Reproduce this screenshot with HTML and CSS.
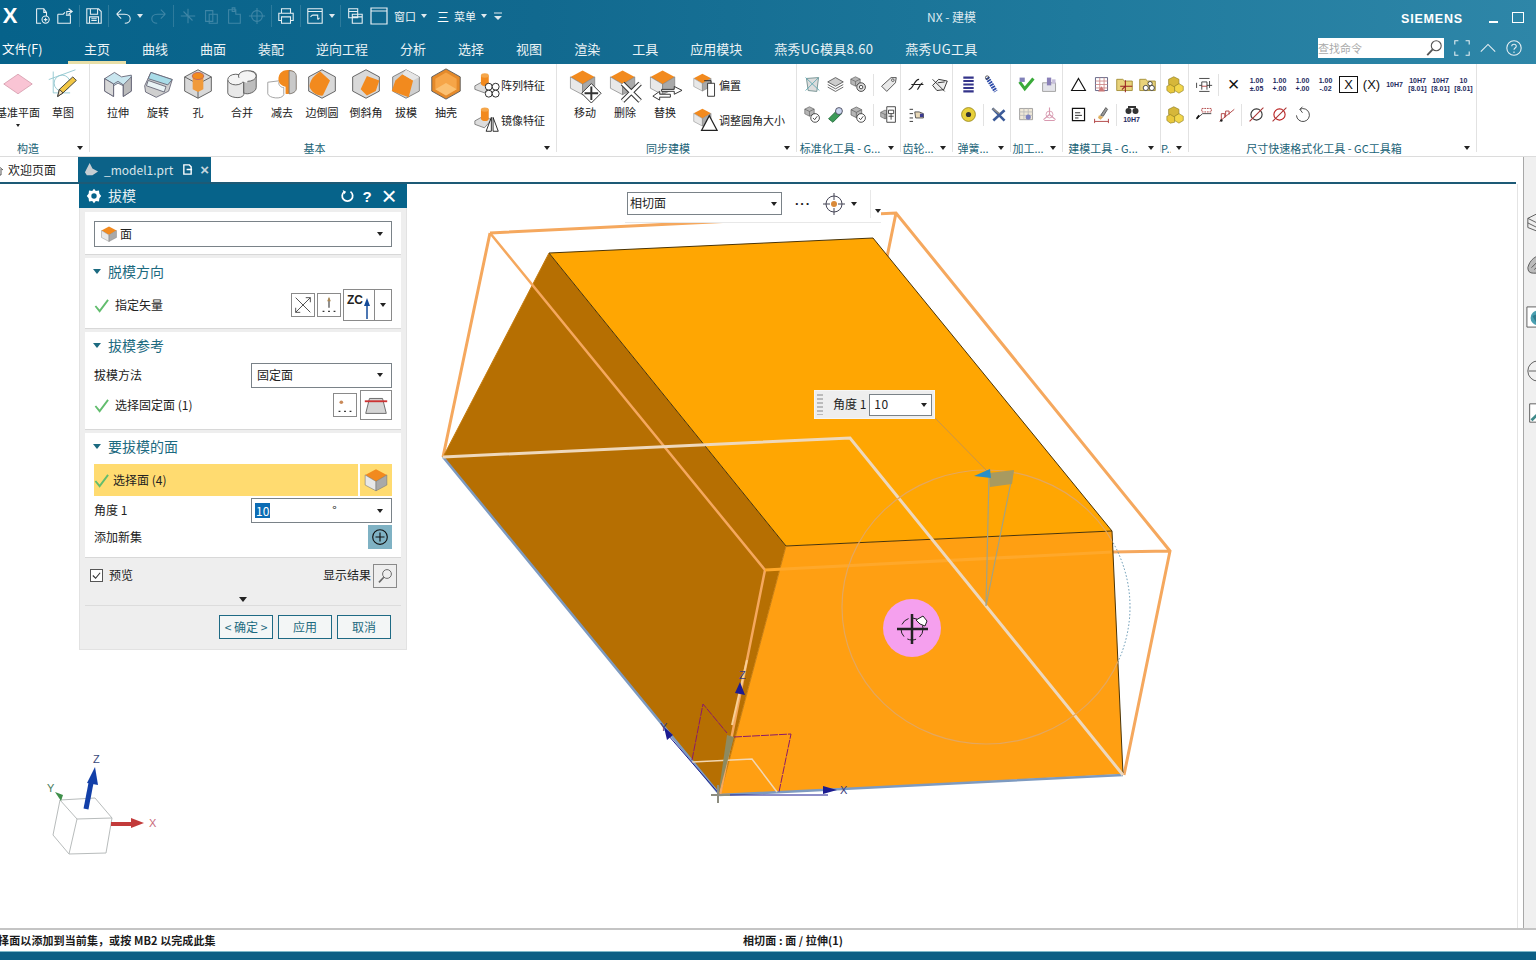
FILE: index.html
```html
<!DOCTYPE html>
<html lang="zh-CN">
<head>
    <meta charset="UTF-8">
    <title>NX - 建模</title>
    <link rel="stylesheet" href="styles.css">
</head>
<body>
    <!-- shared icons -->
    <svg class="defs" width="0" height="0">
        <clipPath id="part"><path d="M549 253 873 238 1112 531 1123 774 720 795 443 457Z"/></clipPath>
        <symbol id="cube" viewBox="0 0 36 36">
            <path d="M18 3 33 11 18 20 3 11Z" fill="#f28a1e"/>
            <path d="M3 11 18 20V33L3 25Z" fill="#e8e8e8" stroke="#777" stroke-width=".8"/>
            <path d="M33 11 18 20V33L33 25Z" fill="#a9a9a9" stroke="#777" stroke-width=".8"/>
        </symbol>
        <symbol id="extrude" viewBox="0 0 36 36">
            <path d="M3 12 14 5 22 10 33 8V26L24 32V20L18 17 13 20V32L3 26Z" fill="#c9e6ef" stroke="#667" stroke-width="1"/>
            <path d="M3 12 13 18V32M13 18 18 15 24 19V32" fill="none" stroke="#667"/>
            <path d="M13 18V32L3 26V12Z" fill="#d8d8d8" stroke="#667"/>
            <path d="M24 19V32L33 26V10Z" fill="#bbb" stroke="#667"/>
        </symbol>
        <symbol id="revolve" viewBox="0 0 36 36">
            <path d="M3 20 10 5 34 13 30 26 16 33 4 27Z" fill="#cfcfcf" stroke="#667"/>
            <path d="M10 5 34 13 29 19 7 12Z" fill="#a9dce8" stroke="#667"/>
            <path d="M7 14 27 21 25 27 5 20Z" fill="#e9f3f5" stroke="#667"/>
        </symbol>
        <symbol id="hole" viewBox="0 0 36 36">
            <path d="M18 2 33 10V26L18 34 3 26V10Z" fill="#d9d9d9" stroke="#555"/>
            <path d="M3 10 18 18 33 10M18 18V34" fill="none" stroke="#555"/>
            <path d="M12 9V24L18 27 24 24V9Z" fill="#f09a3a"/>
            <ellipse cx="18" cy="9" rx="6.500" ry="4" fill="#f28a1e" stroke="#b66"/>
        </symbol>
        <symbol id="unite" viewBox="0 0 36 36">
            <path d="M2 14V28C2 33 18 36 20 30V14Z" fill="#e8e8e8" stroke="#555"/>
            <path d="M20 12V28C24 31 34 27 34 22V8C34 2 22 2 20 8Z" fill="#bdbdbd" stroke="#555"/>
            <ellipse cx="11" cy="13" rx="9" ry="6" fill="#f4f4f4" stroke="#555"/>
            <ellipse cx="24" cy="9" rx="10" ry="6" fill="#f4f4f4" stroke="#555"/>
            <path d="M14 12 20 14 24 15" stroke="#f4f4f4" stroke-width="3" fill="none"/>
        </symbol>
        <symbol id="subtract" viewBox="0 0 36 36">
            <path d="M2 16V29C3 34 18 36 20 30V22C14 22 12 14 18 14Z" fill="#fff" stroke="#999"/>
            <path d="M16 6C20 0 34 1 34 9V24C33 28 26 30 22 29V21C14 20 12 12 16 6Z" fill="#f28a1e"/>
            <path d="M26 3C33 3 34 7 34 9V24C33 28 28 29 26 29Z" fill="#c9c9c9" stroke="#777"/>
        </symbol>
        <symbol id="blend" viewBox="0 0 36 36">
            <path d="M18 2 33 10V26L18 34 3 26V10Z" fill="#d9d9d9" stroke="#555"/>
            <path d="M16 4 27 14 19 31C10 32 4 24 4 20 5 12 10 8 16 4Z" fill="#f28a1e"/>
        </symbol>
        <symbol id="chamfer" viewBox="0 0 36 36">
            <path d="M18 2 33 10V26L18 34 3 26V10Z" fill="#d9d9d9" stroke="#555"/>
            <path d="M12 24 19 9 33 14 29 26 19 31Z" fill="#f28a1e"/>
        </symbol>
        <symbol id="draft" viewBox="0 0 36 36">
            <path d="M18 2 33 10V26L18 34 3 26V10Z" fill="#cfcfcf" stroke="#777"/>
            <path d="M6 14 14 7 26 14 21 33 2 26Z" fill="#f28a1e"/>
            <path d="M14 7 18 2 33 10 26 14Z" fill="#e6e6e6"/>
        </symbol>
        <symbol id="shell" viewBox="0 0 36 36">
            <path d="M18 1 34 10V26L18 35 2 26V10Z" fill="#e58a2a" stroke="#555"/>
            <path d="M18 5 30 12V24L18 31 6 24V12Z" fill="#f6a548"/>
            <path d="M6 24 18 17 30 24 18 31Z" fill="#fbc071"/>
        </symbol>
        <symbol id="pattern" viewBox="0 0 30 30">
            <path d="M1 16 12 10 20 15 12 24 1 20Z" fill="#ddd" stroke="#777"/>
            <path d="M8 4V14C10 17 16 17 17 14V4Z" fill="#f28a1e"/>
            <ellipse cx="12.500" cy="4" rx="4.500" ry="2.500" fill="#f5a64a"/>
            <g fill="#fff" stroke="#111"><circle cx="17" cy="17" r="4"/><circle cx="25" cy="17" r="4"/><circle cx="17" cy="25" r="4"/><circle cx="25" cy="25" r="4"/></g>
        </symbol>
        <symbol id="mirror" viewBox="0 0 30 30">
            <path d="M1 16 12 10 20 15 12 24 1 20Z" fill="#ddd" stroke="#777"/>
            <path d="M8 3V14C10 17 16 17 17 14V3Z" fill="#f28a1e"/>
            <ellipse cx="12.500" cy="3" rx="4.500" ry="2.500" fill="#f5a64a"/>
            <path d="M14 28 20 12V28ZM28 28 22 12V28Z" fill="#fff" stroke="#111"/>
        </symbol>
        <symbol id="gear" viewBox="0 0 20 20">
            <path d="M10 2 12 4.500 15.500 4 16 7.500 18 10 16 12.500 15.500 16 12 15.500 10 18 8 15.500 4.500 16 4 12.500 2 10 4 7.500 4.500 4 8 4.500Z" fill="currentColor"/>
            <circle cx="10" cy="10" r="3" fill="#06638a"/>
        </symbol>
        <symbol id="tick" viewBox="0 0 16 16">
            <path d="M1.500 8.500 6 14 15 2" fill="none" stroke="#62bd6e" stroke-width="2"/>
        </symbol>
        <symbol id="lens" viewBox="0 0 20 20">
            <circle cx="12.500" cy="7.500" r="5.500" fill="none" stroke="currentColor" stroke-width="1.200"/>
            <path d="M8.500 11.500 2.500 18" stroke="currentColor" stroke-width="2"/>
        </symbol>
        <symbol id="gcube" viewBox="0 0 22 22">
            <path d="M11 3 19 7V15L11 19 3 15V7Z" fill="#b5b5b5" stroke="#555"/>
            <path d="M3 7 11 11 19 7M11 11V19" fill="none" stroke="#555"/>
        </symbol>
        <symbol id="ycubes" viewBox="0 0 22 22">
            <path d="M9 2 15 5V11L9 14 3 11V5Z" fill="#d6b73a" stroke="#8a7a20" stroke-width=".7"/>
            <path d="M5 11 10 14V20L5 21 1 18V13Z" fill="#e9c83c" stroke="#8a7a20" stroke-width=".7"/>
            <path d="M15 10 20 13V18L15 21 10 18V13Z" fill="#f2d64a" stroke="#8a7a20" stroke-width=".7"/>
        </symbol>
        <symbol id="folder" viewBox="0 0 22 22">
            <path d="M2 5H9L11 7H20V18H2Z" fill="#e8d27a" stroke="#a08a30"/>
        </symbol>
        <symbol id="phi" viewBox="0 0 22 22">
            <circle cx="11" cy="11" r="6.500" fill="none" stroke="currentColor" stroke-width="1.300"/>
            <path d="M3 19 19 3" stroke="#a33" stroke-width="1.200"/>
        </symbol>
    </svg>

    <header class="top">
        <div class="title-row">
            <div class="qa">
                <span class="logo">X</span>
                <svg class="qi" viewBox="0 0 20 20"><path d="M4 2H12L15 6V10M4 2V18H9M12 2V6H15" /><circle cx="14" cy="14" r="4"/><path d="M14 12V16M12 14H16"/></svg>
                <svg class="qi" viewBox="0 0 20 20"><path d="M2 8H8L10 6M2 8V18H16V9H11M14 2 18 5 14 8M18 5H12V8"/></svg>
                <i class="qsep"></i>
                <svg class="qi" viewBox="0 0 20 20"><path d="M2 2H15L18 5V18H2ZM6 2V8H14V2M5 18V11H15V18M7 13H13M7 15H13"/></svg>
                <i class="qsep"></i>
                <svg class="qi" viewBox="0 0 20 20"><path d="M3 8 8 3M3 8 8 13M3 8H12C20 8 20 18 12 18"/></svg>
                <i class="caret w"></i>
                <svg class="qi dim redo" viewBox="0 0 20 20"><path d="M17 8 12 3M17 8 12 13M17 8H8C0 8 0 18 8 18"/></svg>
                <i class="qsep"></i>
                <svg class="qi dim" viewBox="0 0 20 20"><path d="M2 10H18M10 2V18M5 5 15 15"/></svg>
                <svg class="qi dim" viewBox="0 0 20 20"><path d="M4 4H12V16H4ZM8 8H17V18H8Z"/></svg>
                <svg class="qi dim" viewBox="0 0 20 20"><path d="M4 3H12V8H17V18H4ZM8 1H11V5H8Z"/></svg>
                <svg class="qi dim" viewBox="0 0 20 20"><circle cx="10" cy="10" r="6"/><path d="M10 1V19M1 10H19"/></svg>
                <i class="qsep"></i>
                <svg class="qi" viewBox="0 0 20 20"><path d="M5 7V2H15V7M5 15H2V7H18V15H15M5 11H15V18H5Z"/></svg>
                <i class="qsep"></i>
                <svg class="qi" viewBox="0 0 20 20"><path d="M2 2H18V18H2ZM2 5H18M7 9H13V14M7 9 5 11M13 14 15 12"/></svg>
                <i class="caret w"></i>
                <i class="qsep"></i>
                <svg class="qi" viewBox="0 0 20 20"><path d="M3 2H13V12H3ZM3 5H13M7 8H18V18H7ZM7 11H18"/></svg>
                <svg class="qi wide" viewBox="0 0 20 20"><path d="M2 2H18V18H2ZM2 5H18"/></svg>
                <span class="qtext">窗口</span>
                <i class="caret w"></i>
                <span class="burger">三</span>
                <span class="qtext">菜单</span>
                <i class="caret w"></i>
                <svg class="custom" viewBox="0 0 10 10"><path d="M1 2H9" stroke="#dfe9ee"/><path d="M1 5H9L5 9Z" fill="#dfe9ee"/></svg>
            </div>
            <div class="app-title">NX - 建模</div>
            <div class="brand">SIEMENS</div>
            <div class="win-btns"><i class="win-min"></i><i class="win-max"></i></div>
        </div>
        <div class="menu-row">
            <span class="menu-file">文件(F)</span>
            <nav class="menu">
                <a class="on">主页</a><a>曲线</a><a>曲面</a><a>装配</a><a>逆向工程</a><a>分析</a><a>选择</a><a>视图</a><a>渲染</a><a>工具</a><a>应用模块</a><a class="spaced">燕秀UG模具8.60</a><a class="spaced">燕秀UG工具</a>
            </nav>
            <div class="search"><span>查找命令</span><svg class="search-ic"><use href="#lens"/></svg></div>
            <svg class="head-ic" viewBox="0 0 20 20"><path d="M2 6V2H6M14 2H18V6M2 14V18H6M14 18H18V14"/></svg>
            <svg class="head-ic" viewBox="0 0 20 20"><path d="M2 14 10 6 18 14"/></svg>
            <svg class="head-ic" viewBox="0 0 20 20"><circle cx="10" cy="10" r="8"/><path d="M7.500 8C7.500 5 12.500 5 12.500 8 12.500 10 10 10 10 12M10 14V15.500"/></svg>
        </div>
    </header>

    <section class="ribbon">
        <div class="group g-build">
            <div class="group-body">
                <div class="tool plane">
                    <svg class="big" viewBox="0 0 36 36"><path d="M2 18 18 7 34 18 18 29Z" fill="#f9c4d4" stroke="#d8a0b0"/></svg>
                    <span>基准平面</span><i class="caret"></i>
                </div>
                <div class="tool sketch">
                    <svg class="big" viewBox="0 0 36 36"><path d="M2 13 32 2M7 4V28H26" fill="none" stroke="#8fc5cf"/><circle cx="17" cy="17" r="9" fill="none" stroke="#8fc5cf"/><path d="M12 32 14 24 29 10 33 14 18 28Z" fill="#f2c744" stroke="#333"/><path d="M12 32 14 24 18 28Z" fill="#f3dfb8" stroke="#333"/></svg>
                    <span>草图</span>
                </div>
            </div>
            <div class="group-label"><span>构造</span><i class="caret"></i></div>
        </div>
        <div class="group g-basic">
            <div class="group-body">
                <div class="tool"><svg class="big"><use href="#extrude"/></svg><span>拉伸</span></div>
                <div class="tool"><svg class="big"><use href="#revolve"/></svg><span>旋转</span></div>
                <div class="tool"><svg class="big"><use href="#hole"/></svg><span>孔</span></div>
                <div class="tool push"><svg class="big"><use href="#unite"/></svg><span>合并</span></div>
                <div class="tool"><svg class="big"><use href="#subtract"/></svg><span>减去</span></div>
                <div class="tool"><svg class="big"><use href="#blend"/></svg><span>边倒圆</span></div>
                <div class="tool push"><svg class="big"><use href="#chamfer"/></svg><span>倒斜角</span></div>
                <div class="tool"><svg class="big"><use href="#draft"/></svg><span>拔模</span></div>
                <div class="tool"><svg class="big"><use href="#shell"/></svg><span>抽壳</span></div>
                <div class="side-tools">
                    <div class="side"><svg class="mid"><use href="#pattern"/></svg><span>阵列特征</span></div>
                    <div class="side"><svg class="mid"><use href="#mirror"/></svg><span>镜像特征</span></div>
                </div>
            </div>
            <div class="group-label"><span>基本</span><i class="caret"></i></div>
        </div>
        <div class="group g-sync">
            <div class="group-body">
                <div class="tool"><svg class="big" viewBox="0 0 36 36"><use href="#cube" width="30" height="30"/><path d="M24 16 34 26 24 36 14 26Z" fill="#fff" stroke="#333"/><path d="M24 19V33M17 26H31" stroke="#333" stroke-width="2"/></svg><span>移动</span></div>
                <div class="tool"><svg class="big" viewBox="0 0 36 36"><use href="#cube" width="30" height="30"/><path d="M15 16 33 34M33 16 15 34" stroke="#333" stroke-width="5"/><path d="M15 16 33 34M33 16 15 34" stroke="#fff" stroke-width="3"/></svg><span>删除</span></div>
                <div class="tool"><svg class="big" viewBox="0 0 36 36"><use href="#cube" width="30" height="30"/><path d="M14 22H27V19L35 23 27 27V24H14ZM23 27H12V24L5 29 12 33V30H23Z" fill="#fff" stroke="#333"/></svg><span>替换</span></div>
                <div class="side-tools">
                    <div class="side"><svg class="mid" viewBox="0 0 30 30"><use href="#cube" width="24" height="24"/><path d="M18 13H26V28H18Z" fill="#fff" stroke="#222"/><path d="M14 10H22V13" fill="none" stroke="#222"/></svg><span>偏置</span></div>
                    <div class="side"><svg class="mid" viewBox="0 0 30 30"><use href="#cube" width="24" height="24"/><path d="M20 10 29 27H11Z" fill="#fff" stroke="#222" stroke-width="1.400"/></svg><span>调整圆角大小</span></div>
                </div>
            </div>
            <div class="group-label"><span>同步建模</span><i class="caret"></i></div>
        </div>
        <div class="group g-std">
            <div class="icons">
                <div class="icon-row">
                    <svg class="ic" viewBox="0 0 22 22"><path d="M4 4 18 3 16 19 6 18Z" fill="#ddd" stroke="#6a8a8a"/><path d="M3 3 19 18M3 18 18 3" stroke="#5aa6b0"/></svg>
                    <svg class="ic" viewBox="0 0 22 22"><path d="M11 3 20 8 11 13 2 8Z" fill="#ccc" stroke="#555"/><path d="M2 11 11 16 20 11M2 14 11 19 20 14" fill="none" stroke="#555"/></svg>
                    <svg class="ic" viewBox="0 0 22 22"><use href="#gcube" width="15" height="15"/><circle cx="14" cy="14" r="5" fill="#ddd" stroke="#333"/><circle cx="14" cy="14" r="2" fill="#fff" stroke="#333"/></svg>
                    <i class="rsep"></i>
                    <svg class="ic" viewBox="0 0 22 22"><path d="M3 13 14 3 20 3 19 9 9 19Z" fill="#e8e8e8" stroke="#444"/><circle cx="16" cy="6" r="1.500" fill="#fff" stroke="#444"/></svg>
                </div>
                <div class="icon-row">
                    <svg class="ic" viewBox="0 0 22 22"><use href="#gcube" width="15" height="15"/><circle cx="14" cy="15" r="5" fill="#fff" stroke="#333"/><path d="M11.500 15 13.500 17 16.500 13" fill="none" stroke="#333"/></svg>
                    <svg class="ic" viewBox="0 0 22 22"><path d="M3 16 13 6 18 10 8 20Z" fill="#3b9a58" stroke="#1e6a38"/><circle cx="15" cy="7" r="4" fill="#c9d4ee" stroke="#445"/></svg>
                    <svg class="ic" viewBox="0 0 22 22"><use href="#gcube" width="17" height="17"/><circle cx="14" cy="15" r="5" fill="#fff" stroke="#333"/><path d="M11.500 15 13.500 17 16.500 13" fill="none" stroke="#333"/></svg>
                    <i class="rsep"></i>
                    <svg class="ic" viewBox="0 0 22 22"><use href="#gcube" width="14" height="14" y="4"/><path d="M9 2H19V20H9Z" fill="#fff" stroke="#333"/><path d="M11 6H17V10H11ZM11 13H17M14 10V17" fill="none" stroke="#333"/></svg>
                </div>
            </div>
            <div class="group-label"><span>标准化工具 - G...</span><i class="caret"></i></div>
        </div>
        <div class="group g-gear">
            <div class="icons">
                <div class="icon-row">
                    <svg class="ic" viewBox="0 0 22 22"><path d="M2 17C8 16 8 5 14 5M5 11H19M12 17C14 15 15 10 18 9" fill="none" stroke="#222" stroke-width="1.300"/></svg>
                    <svg class="ic" viewBox="0 0 22 22"><path d="M3 12 10 5 20 7 16 17 8 18Z" fill="#eee" stroke="#222"/><path d="M3 5 17 19M9 9 17 8" stroke="#222"/></svg>
                </div>
                <div class="icon-row">
                    <svg class="ic" viewBox="0 0 22 22"><path d="M3 5H7M3 10H7M3 15H7M3 19H7" stroke="#222"/><path d="M9 8H14L19 10V15H10Z" fill="#e9d9b8" stroke="#444"/><path d="M15 10H19V14H15Z" fill="#3a3a90"/></svg>
                </div>
            </div>
            <div class="group-label"><span>齿轮...</span><i class="caret"></i></div>
        </div>
        <div class="group g-spring">
            <div class="icons">
                <div class="icon-row">
                    <svg class="ic" viewBox="0 0 22 22"><path d="M5 3H17M5 7H17M5 11H17M5 15H17M5 19H17" stroke="#34348a" stroke-width="2.400"/></svg>
                    <svg class="ic" viewBox="0 0 22 22"><path d="M6 3 16 19" stroke="#2c4aa8" stroke-width="5" stroke-dasharray="2 1"/><circle cx="6" cy="3" r="2" fill="none" stroke="#444"/></svg>
                </div>
                <div class="icon-row">
                    <svg class="ic" viewBox="0 0 22 22"><circle cx="11" cy="11" r="8" fill="#e8d03a" stroke="#9a8a20"/><circle cx="11" cy="11" r="3" fill="#333"/></svg>
                    <i class="rsep"></i>
                    <svg class="ic" viewBox="0 0 22 22"><path d="M4 4 18 18M18 6 5 18" stroke="#3b5a98" stroke-width="3"/><path d="M4 4 12 10" stroke="#888" stroke-width="2"/></svg>
                </div>
            </div>
            <div class="group-label"><span>弹簧...</span><i class="caret"></i></div>
        </div>
        <div class="group g-mach">
            <div class="icons">
                <div class="icon-row">
                    <svg class="ic" viewBox="0 0 22 22"><path d="M3 8 9 16 19 4" fill="none" stroke="#3aaa3a" stroke-width="3.500"/><path d="M3 3H9V8H3Z" fill="#8080b8"/></svg>
                    <svg class="ic" viewBox="0 0 22 22"><path d="M3 9H18V19H3Z" fill="#e4e4ea" stroke="#999"/><path d="M8 3H13V12H8Z" fill="#8a80b8"/><path d="M14 5H18V10H14Z" fill="#c8c0dc"/></svg>
                </div>
                <div class="icon-row">
                    <svg class="ic" viewBox="0 0 22 22"><path d="M3 4H18V17H3Z" fill="#efe8d8" stroke="#999"/><path d="M3 8H18M3 12H18M8 4V17M13 4V17" stroke="#bbb"/><circle cx="13" cy="14" r="3" fill="#7a80c0"/></svg>
                    <svg class="ic" viewBox="0 0 22 22"><path d="M11 3V11M11 11 4 17M11 11 18 17M5 18H17" fill="none" stroke="#d89ab0" stroke-width="1.300"/><circle cx="11" cy="11" r="4" fill="none" stroke="#d89ab0"/></svg>
                </div>
            </div>
            <div class="group-label"><span>加工...</span><i class="caret"></i></div>
        </div>
        <div class="group g-model">
            <div class="icons">
                <div class="icon-row">
                    <svg class="ic" viewBox="0 0 22 22"><path d="M11 4 19 18H3Z" fill="none" stroke="#111" stroke-width="1.300"/></svg>
                    <svg class="ic" viewBox="0 0 22 22"><path d="M4 3H18V18H4Z" fill="#fff" stroke="#557"/><path d="M4 7H18M4 11H18M4 15H18M9 3V18M14 3V18" stroke="#c88"/><path d="M11 13 15 19H7Z" fill="#c77"/></svg>
                    <svg class="ic" viewBox="0 0 22 22"><use href="#folder"/><path d="M12 6V20M6 13H20M8 17 12 13" stroke="#922" stroke-width="1.200"/></svg>
                    <svg class="ic" viewBox="0 0 22 22"><use href="#folder"/><circle cx="9" cy="15" r="3" fill="#fff" stroke="#333"/><circle cx="16" cy="15" r="3" fill="#fff" stroke="#333"/><circle cx="14" cy="10" r="2.500" fill="#fff" stroke="#333"/></svg>
                </div>
                <div class="icon-row">
                    <svg class="ic" viewBox="0 0 22 22"><path d="M4 4H18V18H4Z" fill="#fff" stroke="#111" stroke-width="1.400"/><path d="M7 9H13M7 12H15M7 15H11" stroke="#111"/></svg>
                    <svg class="ic" viewBox="0 0 22 22"><path d="M10 12 16 3 18 5 13 13Z" fill="#999" stroke="#555"/><path d="M8 12 13 14 10 17 7 15Z" fill="#e0b060"/><path d="M3 19H19M3 16V21M19 16V21" stroke="#a33"/></svg>
                    <i class="rsep"></i>
                    <span class="ic txt binoc"><svg class="bino" viewBox="0 0 14 9"><circle cx="3.500" cy="5" r="3" fill="#333"/><circle cx="10.500" cy="5" r="3" fill="#333"/><path d="M3 1H11" stroke="#333" stroke-width="2"/></svg>10H7</span>
                </div>
            </div>
            <div class="group-label"><span>建模工具 - G...</span><i class="caret"></i></div>
        </div>
        <div class="group g-p">
            <div class="icons">
                <div class="icon-row"><svg class="ic"><use href="#ycubes"/></svg></div>
                <div class="icon-row"><svg class="ic"><use href="#ycubes"/></svg></div>
            </div>
            <div class="group-label"><span>P...</span><i class="caret"></i></div>
        </div>
        <div class="group g-dim">
            <div class="icons">
                <div class="icon-row">
                    <svg class="ic" viewBox="0 0 22 22"><path d="M3 9V15M6 12H9M9 17V8H15V17M6 19H18M6 4H18M18 7V15M15 12H21" fill="none" stroke="#333"/><path d="M9 13H15" stroke="#a33"/></svg>
                    <i class="rsep"></i>
                    <span class="ic txt big-x">×</span>
                    <span class="ic txt">1.00<br>±.05</span>
                    <span class="ic txt">1.00<br>+.00</span>
                    <span class="ic txt">1.00<br>+.00</span>
                    <span class="ic txt">1.00<br>-.02</span>
                    <span class="ic txt boxed"><em>X</em></span>
                    <span class="ic txt round"><em>(X)</em></span>
                    <span class="ic txt">10H7</span>
                    <span class="ic txt">10H7<br>[8.01]</span>
                    <span class="ic txt">10H7<br>[8.01]</span>
                    <span class="ic txt">10<br>[8.01]</span>
                </div>
                <div class="icon-row">
                    <svg class="ic" viewBox="0 0 22 22"><path d="M3 16 10 10H20" fill="none" stroke="#333"/><path d="M3 16 6 12" stroke="#111" stroke-width="2"/><path d="M9 4H20V8H9Z" fill="none" stroke="#a33" stroke-dasharray="2 1"/></svg>
                    <svg class="ic" viewBox="0 0 22 22"><path d="M3 19 20 5" stroke="#a33"/><path d="M5 18V10H9V15M10 13V7H14V11" fill="none" stroke="#a33"/><circle cx="5" cy="18" r="1.500" fill="#222"/></svg>
                    <i class="rsep"></i>
                    <svg class="ic k"><use href="#phi"/></svg>
                    <svg class="ic r"><use href="#phi"/></svg>
                    <svg class="ic" viewBox="0 0 22 22"><path d="M8 5A7.500 7.500 0 1 1 4 12M8 5 11 2M8 5 11 9" fill="none" stroke="#333"/></svg>
                </div>
            </div>
            <div class="group-label"><span>尺寸快速格式化工具 - GC工具箱</span><i class="caret"></i></div>
        </div>
    </section>

    <div class="tabs">
        <div class="tab-home">
            <svg class="home-ic" viewBox="0 0 12 12"><path d="M0 6 6 1 12 6M2 5V11H10V5" fill="none" stroke="#555"/></svg>
            <span>欢迎页面</span>
        </div>
        <div class="tab-active">
            <svg class="tab-ic" viewBox="0 0 16 16"><path d="M1 11 6 1 9 7 15 10 9 14H3Z" fill="#c7ced2"/></svg>
            <span>_model1.prt</span>
            <svg class="tab-doc" viewBox="0 0 12 12"><path d="M2 1H8L10 3V11H2ZM5 6H11" fill="none" stroke="#fff" stroke-width="1.500"/></svg>
            <span class="tab-x">×</span>
        </div>
    </div>

    <main class="work">
        <div class="viewport">
            <svg class="model" viewBox="0 184 1518 744" width="1518" height="744">
                <!-- wireframe of the original block, behind the part -->
                <g class="wire">
                    <path d="M490 233 443 457M490 233 896 213 1170 551 1124 775M896 213 850 438M1112 552 1170 551"/>
                </g>
                <ellipse class="ring-dot" cx="986" cy="607" rx="144" ry="137"/>
                <!-- part faces -->
                <path class="face-dark" d="M549 253 786 546 720 795 443 457Z"/>
                <path class="face-top" d="M549 253 873 238 1112 531 786 546Z"/>
                <path class="face-front" d="M786 546 1112 531 1123 774 720 795Z"/>
                <path class="edge" d="M549 253 873 238 1112 531 1123 774M549 253 786 546 1112 531"/>
                <path class="edge soft" d="M549 253 443 457M786 546 720 795"/>
                <path class="edge-blue" d="M443 457 720 795 1123 775"/>
                <!-- wireframe over the part -->
                <path class="wire-front" d="M490 233 765 570 720 795"/>
                <path class="wire-faint" d="M765 570 1112 552"/>
                <path class="wire-pale" d="M443 457 850 438 1123 775"/>
                <ellipse class="ring" cx="986" cy="607" rx="144" ry="137" clip-path="url(#part)"/>
                <!-- draft angle handle -->
                <path class="leader" d="M935 418 988 472"/>
                <path class="wedge" d="M986 606 989 476 1013 472Z"/>
                <path class="wedge-cap" d="M989 473 1014 470 1012 484 990 487Z"/>
                <path class="cone" d="M974 476 990 469 991 478Z"/>
                <!-- CSYS at the corner -->
                <path class="pale-thin" d="M692 762 752 759 777 792"/>
                <path class="z-dash" d="M732 725 747 660"/>
                <path class="sq" d="M692 760 703 704 727 733M734 737 791 734 779 792"/>
                <path class="origin-edge" d="M727 735 734 737 718 797Z"/>
                <path class="axis" d="M720 795H828M720 795 668 735"/>
                <path class="axis-head" d="M823 786 837 790 823 794ZM664 727 673 735 667 740ZM740 682 745 695 735 693Z"/>
                <path class="origin" d="M718 785V803M711 795H730"/>
                <text class="axis-label" x="840" y="794">X</text>
                <text class="axis-label" x="660" y="731">Y</text>
                <text class="axis-label" x="739" y="679">Z</text>
                <!-- cursor highlight -->
                <circle class="halo" cx="912" cy="628" r="29"/>
                <circle class="cursor-ring" cx="912" cy="629" r="11"/>
                <path class="cursor" d="M897 629H928M912 614V644"/>
                <path class="cursor-tag" d="M916 620 923 616 927 621 925 626 920 624Z"/>
                <!-- view triad -->
                <g class="triad">
                    <path d="M60 800 95 798 112 818 77 819ZM60 800 53 835 69 854 77 819M112 818 106 853 69 854"/>
                </g>
                <path class="tri-z" d="M86 809 91 783"/>
                <path class="tri-z-head" d="M95 767 98 785 87 783Z"/>
                <path class="tri-y" d="M61 801 55 792 63 795Z"/>
                <path class="tri-x" d="M111 824H133"/>
                <path class="tri-x-head" d="M144 823 131 818V828Z"/>
                <text class="tri-lab z" x="93" y="763">Z</text>
                <text class="tri-lab y" x="47" y="792">Y</text>
                <text class="tri-lab x" x="149" y="827">X</text>
            </svg>

            <div class="sel-bar">
                <div class="combo sel-combo"><span>相切面</span><i class="caret"></i></div>
                <span class="dots">···</span>
                <svg class="snap" viewBox="0 0 24 24"><circle cx="12" cy="12" r="8" fill="none" stroke="#445"/><circle cx="12" cy="12" r="3" fill="#d98a3a"/><path d="M12 1V8M12 16V23M1 12H8M16 12H23" stroke="#445"/></svg>
                <i class="caret"></i>
                <i class="sel-sep"></i>
                <i class="caret low"></i>
            </div>

            <div class="label-box">
                <i class="grip"></i>
                <span>角度 1</span>
                <div class="combo label-combo"><span>10</span><i class="caret"></i></div>
            </div>

            <aside class="dialog">
                <div class="dlg-title">
                    <svg class="dlg-gear"><use href="#gear"/></svg>
                    <span class="dlg-name">拔模</span>
                    <svg class="dlg-btn" viewBox="0 0 16 16"><path d="M5 3A6 6 0 1 0 12 3" fill="none" stroke="#fff" stroke-width="2"/><path d="M3 1 7 3 5 6Z" fill="#fff"/></svg>
                    <span class="dlg-q">?</span>
                    <span class="dlg-x">×</span>
                </div>
                <div class="dlg-body">
                    <div class="sec sec-type">
                        <div class="combo"><svg class="face-ic"><use href="#cube"/></svg><span>面</span><i class="caret"></i></div>
                    </div>
                    <div class="sec">
                        <h3><i class="tri"></i>脱模方向</h3>
                        <div class="row">
                            <svg class="tick"><use href="#tick"/></svg>
                            <span class="grow">指定矢量</span>
                            <svg class="sq-btn" viewBox="0 0 24 24"><path d="M4 20 20 4M4 4 20 20M15 4H20V9M4 15V20H9" fill="none" stroke="#444"/></svg>
                            <svg class="sq-btn" viewBox="0 0 24 24"><path d="M12 5V15M5 19H7M11 19H13M17 19H19" stroke="#333" stroke-width="1.200"/><path d="M12 3 14 8H10Z" fill="#a85"/></svg>
                            <div class="vec"><span class="vec-main">ZC<svg class="vec-arrow" viewBox="0 0 8 24"><path d="M4 8V23" stroke="#124a9a" stroke-width="1.500"/><path d="M4 2 7 10H1Z" fill="#124a9a"/></svg></span><span class="vec-drop"><i class="caret"></i></span></div>
                        </div>
                    </div>
                    <div class="sec">
                        <h3><i class="tri"></i>拔模参考</h3>
                        <div class="row">
                            <span class="grow">拔模方法</span>
                            <div class="combo half"><span>固定面</span><i class="caret"></i></div>
                        </div>
                        <div class="row fix">
                            <svg class="tick"><use href="#tick"/></svg>
                            <span class="grow">选择固定面 (1)</span>
                            <svg class="sq-btn" viewBox="0 0 24 24"><circle cx="8" cy="9" r="2" fill="#c98a5a"/><path d="M5 19H7M11 19H13M17 19H19" stroke="#333" stroke-width="1.200"/></svg>
                            <svg class="sq-btn tall" viewBox="0 0 30 30"><path d="M8 8H22L26 24H4Z" fill="#d5d5d5" stroke="#666"/><path d="M3 11H27" stroke="#c33" stroke-width="2"/></svg>
                        </div>
                    </div>
                    <div class="sec sec-last">
                        <h3><i class="tri"></i>要拔模的面</h3>
                        <div class="row pick">
                            <div class="pick-main"><svg class="tick"><use href="#tick"/></svg><span>选择面 (4)</span></div>
                            <div class="pick-ic"><svg class="pick-cube"><use href="#cube"/></svg></div>
                        </div>
                        <div class="row angle">
                            <span class="grow">角度 1</span>
                            <div class="combo half"><span class="sel-text">10</span><span class="deg">°</span><i class="caret"></i></div>
                        </div>
                        <div class="row add">
                            <span class="grow">添加新集</span>
                            <span class="add-btn"><svg viewBox="0 0 16 16"><circle cx="8" cy="8" r="6.500" fill="none" stroke="#111"/><path d="M8 4V12M4 8H12" stroke="#111"/></svg></span>
                        </div>
                    </div>
                    <div class="foot">
                        <div class="preview">
                            <span class="check"><svg viewBox="0 0 12 12"><path d="M2 6 5 9 10 3" fill="none" stroke="#333" stroke-width="1.200"/></svg></span>
                            <span class="grow">预览</span>
                            <span class="show">显示结果</span>
                            <span class="lens-btn"><svg><use href="#lens"/></svg></span>
                        </div>
                        <div class="more"><i class="caret"></i></div>
                        <div class="actions">
                            <button>&lt; 确定 &gt;</button>
                            <button>应用</button>
                            <button>取消</button>
                        </div>
                    </div>
                </div>
            </aside>
        </div>
        <div class="side-bar">
            <svg class="rail-ic" viewBox="0 0 24 24"><path d="M12 3 22 8V18L12 22 2 18V8Z" fill="#eee" stroke="#555"/><path d="M2 8 12 13 22 8M12 13V22M2 13 12 18" fill="none" stroke="#555"/></svg>
            <svg class="rail-ic" viewBox="0 0 24 24"><path d="M2 16C4 8 10 2 20 2H24V22H8C4 22 2 20 2 16Z" fill="#bbb" stroke="#555"/><path d="M6 16 16 6M9 18 20 8" stroke="#555"/></svg>
            <svg class="rail-ic boxed-ic" viewBox="0 0 24 24"><path d="M1 1H24V23H1Z" fill="#fff" stroke="#555"/><circle cx="13" cy="13" r="8" fill="#4a9fb0"/><path d="M7 11 14 8 18 14 11 18Z" fill="#2f7a8c"/></svg>
            <svg class="rail-ic clock-ic" viewBox="0 0 24 24"><circle cx="13" cy="12" r="11" fill="none" stroke="#555"/><path d="M3 12H24" stroke="#555"/></svg>
            <svg class="rail-ic" viewBox="0 0 24 24"><path d="M4 2H20V22H4Z" fill="#fff" stroke="#555"/><path d="M6 20 18 8" stroke="#3f8a8a" stroke-width="3"/><path d="M16 4 20 8" stroke="#666" stroke-width="2"/></svg>
        </div>
    </main>

    <footer class="status">
        <span class="status-left">选择面以添加到当前集，或按 MB2 以完成此集</span>
        <span class="status-right">相切面 : 面 / 拉伸(1)</span>
    </footer>
    <div class="taskbar"></div>
</body>
</html>
```

FILE: styles.css
```css
* {
    box-sizing: border-box;
}

body {
    margin: 0;
    width: 1536px;
    height: 960px;
    overflow: hidden;
    display: flex;
    flex-direction: column;
    background: #fff;
    color: #222;
    font-family: "Noto Sans CJK SC", "Noto Sans", sans-serif;
    font-size: 12px;
}

.defs {
    position: absolute;
}

i {
    display: block;
    font-style: normal;
}

.caret {
    flex: none;
    width: 0;
    height: 0;
    border-left: 3.5px solid transparent;
    border-right: 3.5px solid transparent;
    border-top: 4px solid #222;
}

.caret.w {
    border-top-color: #dfe9ee;
}

/* Title bar and menu */
.top {
    height: 64px;
    flex: none;
    color: #fff;
    background: linear-gradient(90deg, #06628a 0%, #11698f 35%, #1f7a9d 70%, #2e86a8 100%);
}

.title-row {
    height: 32px;
    display: flex;
    align-items: center;
    position: relative;
}

.qa {
    display: flex;
    align-items: center;
    gap: 5px;
}

.logo {
    width: 20px;
    margin-right: 8px;
    font: 700 22px "Liberation Sans", sans-serif;
    text-align: center;
}

.qi {
    width: 18px;
    height: 18px;
    flex: none;
    fill: none;
    stroke: #e6eff3;
    stroke-width: 1.2;
}

.qi.wide {
    width: 20px;
    height: 20px;
}

.qi.dim {
    stroke: #3f86a6;
}

.qi.redo {
    margin-left: 2px;
}

.qsep {
    width: 1px;
    height: 22px;
    background: #2e7b9c;
}

.qtext {
    font-size: 11px;
    color: #eef4f7;
}

.burger {
    margin-left: 5px;
    font-size: 12px;
}

.custom {
    width: 10px;
    height: 10px;
    margin-left: 1px;
}

.app-title {
    position: absolute;
    left: 927px;
    top: 8px;
    font-size: 12px;
    color: #dbe9ef;
}

.brand {
    position: absolute;
    left: 1401px;
    top: 12px;
    font: 700 12.5px "Liberation Sans", sans-serif;
    letter-spacing: .8px;
}

.win-btns {
    position: absolute;
    left: 1489px;
    top: 14px;
    display: flex;
    gap: 14px;
}

.win-min {
    width: 9px;
    height: 9px;
    border-bottom: 2px solid #fff;
}

.win-max {
    width: 12px;
    height: 11px;
    margin-top: -2px;
    border: 1.5px solid #fff;
}

.menu-row {
    height: 32px;
    display: flex;
    align-items: center;
}

.menu-file {
    width: 63px;
    padding-left: 2px;
    font-size: 12.5px;
}

.menu {
    display: flex;
    gap: 32px;
    width: 1255px;
    height: 32px;
    padding-left: 21px;
    position: relative;
}

.menu a {
    font-size: 13px;
    line-height: 34px;
    color: #eaf2f5;
    white-space: nowrap;
}

.menu a.on {
    position: relative;
}

.menu a.on::after {
    content: "";
    position: absolute;
    left: -16px;
    right: -16px;
    bottom: 0;
    height: 3px;
    background: #e8dfa8;
}

.menu a.spaced {
    letter-spacing: .35px;
}

.search {
    width: 126px;
    height: 20px;
    display: flex;
    align-items: center;
    justify-content: space-between;
    background: #fff;
    color: #aaa;
    font-size: 11px;
}

.search-ic {
    width: 18px;
    height: 18px;
    margin-right: 1px;
    color: #555;
}

.head-ic {
    width: 18px;
    height: 18px;
    margin-left: 8px;
    fill: none;
    stroke: #e6eff3;
    stroke-width: 1.2;
}

.search + .head-ic {
    margin-left: 9px;
}

/* Ribbon */
.ribbon {
    height: 93px;
    flex: none;
    display: flex;
    background: #fff;
    border-bottom: 1px solid #dcdcdc;
    padding-bottom: 4px;
}

.group {
    flex: none;
    display: flex;
    flex-direction: column;
    border-right: 1px solid #e2e2e2;
}

.group-body,
.icons {
    height: 76px;
    flex: none;
    display: flex;
}

.icons {
    flex-direction: column;
    gap: 7px;
    padding-top: 9px;
    padding-left: 4px;
}

.icon-row {
    display: flex;
    align-items: center;
    height: 23px;
}

.ic {
    width: 23px;
    height: 23px;
    flex: none;
}

svg.ic {
    padding: 2px;
}

.ic.k {
    color: #333;
}

.ic.r {
    color: #b22;
}

.rsep {
    width: 1px;
    height: 22px;
    margin: 0 3px;
    background: #e2e2e2;
    flex: none;
}

.txt {
    display: flex;
    align-items: center;
    justify-content: center;
    text-align: center;
    font: 700 7px/8px "Liberation Sans", sans-serif;
    color: #1d2a60;
}

.txt em {
    font: 400 13px "Liberation Sans", sans-serif;
    color: #111;
}

.big-x {
    font: 400 20px "Liberation Sans", sans-serif;
    color: #111;
}

.boxed em {
    width: 19px;
    height: 17px;
    line-height: 15px;
    border: 1.5px solid #111;
}

.binoc {
    flex-direction: column;
}

.bino {
    width: 14px;
    height: 9px;
    margin-bottom: 1px;
}

.group-label {
    display: flex;
    flex: none;
    align-items: center;
    height: 13px;
    margin-top: 1px;
    color: #1b6478;
    font-size: 11px;
    white-space: nowrap;
}

.group-label span {
    flex: 1;
    min-width: 0;
    overflow: hidden;
    text-align: center;
}

.group-label .caret {
    margin: 0 6px 0 5px;
    border-left-width: 3px;
    border-right-width: 3px;
}

.g-build { width: 90px; }
.g-basic { width: 467px; padding-left: 8px; }
.g-sync { width: 240px; padding-left: 8px; }
.g-std { width: 104px; }
.g-gear { width: 52px; }
.g-spring { width: 58px; }
.g-mach { width: 52px; }
.g-model { width: 98px; }
.g-p { width: 28px; }
.g-dim { width: 288px; padding-left: 0; }

.g-build .group-label span { padding-right: 16px; }
.g-basic .group-label { margin-left: -8px; }
.g-sync .group-label { margin-left: -8px; }
.g-p .icons { padding-left: 3px; }
.g-dim .icons { padding-left: 3px; }

.tool {
    width: 40px;
    padding-top: 4px;
    display: flex;
    flex-direction: column;
    align-items: center;
    font-size: 11px;
    line-height: 16px;
    white-space: nowrap;
}

.tool.push {
    margin-left: 4px;
}

.tool .caret {
    margin-top: 4px;
    border-top-width: 3px;
    border-left-width: 2.5px;
    border-right-width: 2.5px;
}

.big {
    width: 32px;
    height: 32px;
    flex: none;
    margin-bottom: 4px;
}

.g-sync .big {
    width: 35px;
    height: 35px;
    margin-bottom: 1px;
}

.plane {
    width: 44px;
    margin-left: -4px;
}

.sketch {
    width: 36px;
    margin-left: 5px;
}

.side-tools {
    display: flex;
    flex-direction: column;
    gap: 5px;
    padding-top: 6px;
    margin-left: 8px;
}

.side {
    display: flex;
    align-items: center;
    gap: 1px;
    height: 30px;
    font-size: 11px;
    white-space: nowrap;
}

.g-sync .side-tools {
    margin-left: 7px;
}

.mid {
    width: 26px;
    height: 26px;
    flex: none;
}

/* Document tabs */
.tabs {
    height: 27px;
    flex: none;
    display: flex;
    align-items: flex-end;
    border-bottom: 2px solid #1d5a76;
    margin-right: 20px;
}

.tab-home {
    width: 78px;
    height: 25px;
    display: flex;
    align-items: center;
    font-size: 12px;
}

.home-ic {
    width: 12px;
    height: 12px;
    margin: 0 5px 0 -9px;
}

.tab-active {
    width: 133px;
    height: 25px;
    display: flex;
    align-items: center;
    padding-left: 6px;
    background: #0c6288;
    color: #d8e4ea;
    font-size: 12px;
}

.tab-ic {
    width: 15px;
    height: 15px;
    margin-right: 5px;
}

.tab-doc {
    width: 11px;
    height: 11px;
    margin-left: 9px;
}

.tab-x {
    margin-left: 7px;
    font: 700 15px "Liberation Sans", sans-serif;
    color: #c6d6de;
}

/* Graphics window */
.work {
    flex: 1;
    min-height: 0;
    display: flex;
}

.viewport {
    width: 1518px;
    position: relative;
    border-right: 1px solid #e4e4e4;
}

.model {
    position: absolute;
    left: 0;
    top: 0;
    display: block;
}

.wire path,
.wire-front {
    fill: none;
    stroke: #f5a85e;
    stroke-width: 3;
}

.wire-front {
    stroke-width: 2.5;
}

.wire-faint {
    fill: none;
    stroke: #ffa82a;
    stroke-width: 3;
}

.wire-pale {
    fill: none;
    stroke: #eed8bc;
    stroke-width: 3;
}

.pale-thin {
    fill: none;
    stroke: #f2d7b3;
    stroke-width: 1.5;
}

.z-dash {
    fill: none;
    stroke: #f8cf95;
    stroke-width: 2;
}

.face-top { fill: #ffa602; }
.face-dark { fill: #b66f02; }
.face-front { fill: #ff9f12; }

.edge {
    fill: none;
    stroke: #4a3408;
    stroke-width: 1;
}

.edge.soft {
    stroke: #c77d10;
}

.edge-blue {
    fill: none;
    stroke: #7d9ac0;
    stroke-width: 2.5;
}

.ring {
    fill: none;
    stroke: #e3a760;
    stroke-width: 1.2;
}

.ring-dot {
    fill: none;
    stroke: #5f93b0;
    stroke-width: 1;
    stroke-dasharray: 1.5 2;
}

.leader {
    stroke: #c9954a;
    stroke-width: 1;
}

.wedge {
    fill: none;
    stroke: #a2a284;
    stroke-width: 1.2;
}

.wedge-cap { fill: #a89a60; }
.cone { fill: #2a8fc8; }

.sq {
    fill: none;
    stroke: #8a1a6a;
    stroke-width: 1;
    stroke-dasharray: 8 1;
}

.origin-edge { fill: #8d8a60; }

.axis {
    fill: none;
    stroke: #1c1c90;
    stroke-width: 1;
}

.axis-head { fill: #1c1c90; }

.origin {
    stroke: #8d8d80;
    stroke-width: 2;
}

.axis-label {
    font: 11px "Liberation Sans", sans-serif;
    fill: #39397a;
}

.halo { fill: #f5a0ee; }

.cursor-ring {
    fill: none;
    stroke: #222;
    stroke-width: 1;
    stroke-dasharray: 9 4;
}

.cursor {
    stroke: #222;
    stroke-width: 2.5;
}

.cursor + .cursor-tag {
    fill: #fff;
    stroke: #222;
}

.triad path {
    fill: none;
    stroke: #b8bcbc;
    stroke-width: 1;
}

.tri-z {
    stroke: #123fa8;
    stroke-width: 5;
}

.tri-z-head { fill: #123fa8; }
.tri-y { fill: #3f8f4a; }

.tri-x {
    stroke: #c23a3a;
    stroke-width: 4;
}

.tri-x-head { fill: #c23a3a; }

.tri-lab {
    font: 11px "Liberation Sans", sans-serif;
}

.tri-lab.z { fill: #3a4a7a; }
.tri-lab.y { fill: #4a7a5a; }
.tri-lab.x { fill: #c86a7a; }

/* Combo boxes */
.combo {
    display: flex;
    align-items: center;
    height: 26px;
    padding: 0 8px 0 5px;
    background: #fff;
    border: 1px solid #7a8288;
    font-size: 12px;
}

.combo > span {
    padding-bottom: 2px;
}

.combo .caret {
    margin-left: auto;
}

.combo.half {
    width: 141px;
    height: 25px;
}

/* Selection bar over the graphics window */
.sel-bar {
    position: absolute;
    left: 625px;
    top: 9px;
    width: 256px;
    height: 30px;
    display: flex;
    align-items: center;
    padding: 0 0 8px 2px;
    background: #fff;
    border-bottom: 1px solid #e8e8e8;
}

.sel-combo {
    width: 155px;
    height: 23px;
    padding: 0 4px 0 2px;
}

.dots {
    width: 18px;
    margin-left: 13px;
    font: 700 13px "Liberation Sans", sans-serif;
    letter-spacing: 1px;
}

.snap {
    width: 24px;
    height: 24px;
    margin: 0 5px 0 9px;
}

.sel-sep {
    width: 1px;
    height: 28px;
    margin: 0 4px 0 13px;
    background: #e8e8e8;
}

.caret.low {
    margin-top: 14px;
}

/* Value box attached to the handle */
.label-box {
    position: absolute;
    left: 814px;
    top: 206px;
    width: 121px;
    height: 29px;
    display: flex;
    align-items: center;
    background: #eee;
    border: 1px solid #f6f6f6;
    padding-right: 2px;
}

.grip {
    width: 6px;
    height: 21px;
    margin-left: 2px;
    background: repeating-linear-gradient(180deg, #bbb 0 2px, transparent 2px 4px);
}

.label-box > span {
    margin: 0 3px 2px 10px;
    font-size: 12px;
    white-space: nowrap;
}

.label-combo {
    flex: 1;
    height: 22px;
    padding: 0 4px;
    letter-spacing: .5px;
}

/* Draft dialog */
.dialog {
    position: absolute;
    left: 79px;
    top: 0;
    width: 328px;
    height: 466px;
    display: flex;
    flex-direction: column;
    background: #eee;
    border: 1px solid #e2e2e2;
    border-top: 0;
}

.dlg-title {
    height: 24px;
    flex: none;
    display: flex;
    align-items: center;
    padding: 0 6px 0 6px;
    margin: 0 -1px;
    background: #06638a;
    color: #fff;
}

.dlg-gear {
    width: 18px;
    height: 18px;
    color: #fff;
}

.dlg-name {
    flex: 1;
    margin: 0 0 2px 5px;
    font-size: 14px;
    color: #e6eff3;
}

.dlg-btn {
    width: 14px;
    height: 14px;
    margin-right: 3px;
}

.dlg-q {
    width: 20px;
    text-align: center;
    font: 700 15px "Liberation Sans", sans-serif;
}

.dlg-x {
    width: 24px;
    text-align: center;
    font: 400 26px/24px "Liberation Sans", sans-serif;
}

.dlg-body {
    flex: 1;
    display: flex;
    flex-direction: column;
    gap: 3px;
    padding-top: 4px;
}

.sec {
    margin: 0 5px;
    padding: 0 9px;
    background: #fff;
    border-bottom: 1px solid #d8d8d8;
}

.sec-type {
    height: 43px;
    padding-top: 9px;
}

.sec h3 {
    margin: 0;
    height: 26px;
    display: flex;
    align-items: center;
    gap: 7px;
    font-size: 14px;
    font-weight: 400;
    color: #1c6a80;
}

.tri {
    width: 0;
    height: 0;
    margin-left: -1px;
    border-left: 4px solid transparent;
    border-right: 4px solid transparent;
    border-top: 5px solid #1c6a80;
}

.row {
    display: flex;
    align-items: center;
    gap: 2px;
}

.sec:nth-child(2) {
    height: 71px;
}

.sec:nth-child(2) .row {
    height: 44px;
    margin-top: -1px;
}

.sec:nth-child(3) {
    height: 98px;
}

.sec:nth-child(3) .row {
    height: 30px;
    margin-top: 2px;
}

.sec:nth-child(3) .row.fix {
    margin-top: 0;
}

.sec-last {
    height: 125px;
}

.grow {
    flex: 1;
    padding-bottom: 2px;
    white-space: nowrap;
}

.show,
.pick-main span {
    padding-bottom: 2px;
}

.tick {
    width: 15px;
    height: 15px;
    margin-right: 4px;
    flex: none;
}

.face-ic {
    width: 18px;
    height: 18px;
    margin-right: 2px;
}

.sq-btn {
    width: 24px;
    height: 24px;
    border: 1px solid #8a8a8a;
    background: #fff;
}

.sq-btn.tall {
    width: 32px;
    height: 30px;
    margin-left: 1px;
}

.vec {
    height: 32px;
    width: 49px;
    display: flex;
    border: 1px solid #8a8a8a;
}

.vec-main {
    flex: 1;
    display: flex;
    justify-content: center;
    font: 700 12px/20px "Liberation Sans", sans-serif;
}

.vec-arrow {
    width: 8px;
    height: 24px;
    margin-top: 6px;
}

.vec-drop {
    width: 17px;
    display: flex;
    align-items: center;
    justify-content: center;
    border-left: 1px solid #8a8a8a;
}

.pick {
    height: 32px;
    gap: 2px;
    margin-top: 5px;
}

.pick-main {
    width: 264px;
    height: 32px;
    display: flex;
    align-items: center;
    background: #ffdb70;
}

.pick-ic {
    flex: 1;
    height: 32px;
    display: flex;
    align-items: center;
    justify-content: center;
    background: #ffdb70;
}

.pick-cube {
    width: 26px;
    height: 26px;
}

.angle {
    margin-top: 2px;
}

.sel-text {
    background: #0c6cb4;
    color: #fff;
    line-height: 15px;
    padding: 0 1px;
    margin-left: -2px;
}

.combo > .sel-text {
    padding-bottom: 0;
}

.deg {
    margin-left: 62px;
}

.add {
    height: 26px;
    margin-top: 1px;
}

.add-btn {
    width: 24px;
    height: 24px;
    padding: 3px;
    background: #7fb2c4;
}

.add-btn svg {
    display: block;
}

.foot {
    flex: 1;
    display: flex;
    flex-direction: column;
}

.preview {
    display: flex;
    align-items: center;
    height: 27px;
    margin-top: 1px;
    padding: 0 9px 0 10px;
    gap: 2px;
}

.check {
    width: 13px;
    height: 13px;
    margin-right: 4px;
    background: #fff;
    border: 1px solid #555;
    display: flex;
}

.lens-btn {
    width: 24px;
    height: 24px;
    padding: 3px;
    border: 1px solid #8a8a8a;
    color: #666;
}

.lens-btn svg {
    display: block;
    width: 16px;
    height: 16px;
}

.more {
    height: 17px;
    display: flex;
    justify-content: center;
    align-items: center;
    border-bottom: 1px solid #dcdcdc;
    margin: 0 5px;
    padding-top: 4px;
}

.more .caret {
    border-left-width: 4px;
    border-right-width: 4px;
    border-top-width: 5px;
}

.actions {
    display: flex;
    justify-content: flex-end;
    gap: 5px;
    padding: 9px 15px 0 0;
}

.actions button {
    width: 54px;
    height: 24px;
    padding: 0 0 2px;
    border: 1px solid #1e6a84;
    background: #f3f6f6;
    color: #1c6a80;
    font: 12px "Noto Sans CJK SC", sans-serif;
}

/* Right resource bar */
.side-bar {
    width: 13px;
    margin: -27px 0 0 5px;
    padding: 53px 0 0 2px;
    display: flex;
    flex-direction: column;
    gap: 18px;
    overflow: hidden;
    background: #f0f0f0;
    border-left: 1px solid #a8a8a8;
}

.rail-ic {
    width: 22px;
    height: 24px;
    flex: none;
}

.boxed-ic {
    margin-top: 11px;
}

.clock-ic {
    margin-top: 12px;
}

/* Status line */
.status {
    height: 23px;
    flex: none;
    display: flex;
    align-items: center;
    padding-bottom: 2px;
    border-top: 2px solid #c4c4c4;
    font-size: 11px;
    font-weight: 700;
    letter-spacing: .1px;
    white-space: nowrap;
    color: #1a1a1a;
}

.status-left {
    width: 743px;
    text-indent: -13px;
    overflow: hidden;
}

.taskbar {
    height: 9px;
    flex: none;
    background: #0d5f85;
    border-top: 1px solid #7fb8c9;
}
```
